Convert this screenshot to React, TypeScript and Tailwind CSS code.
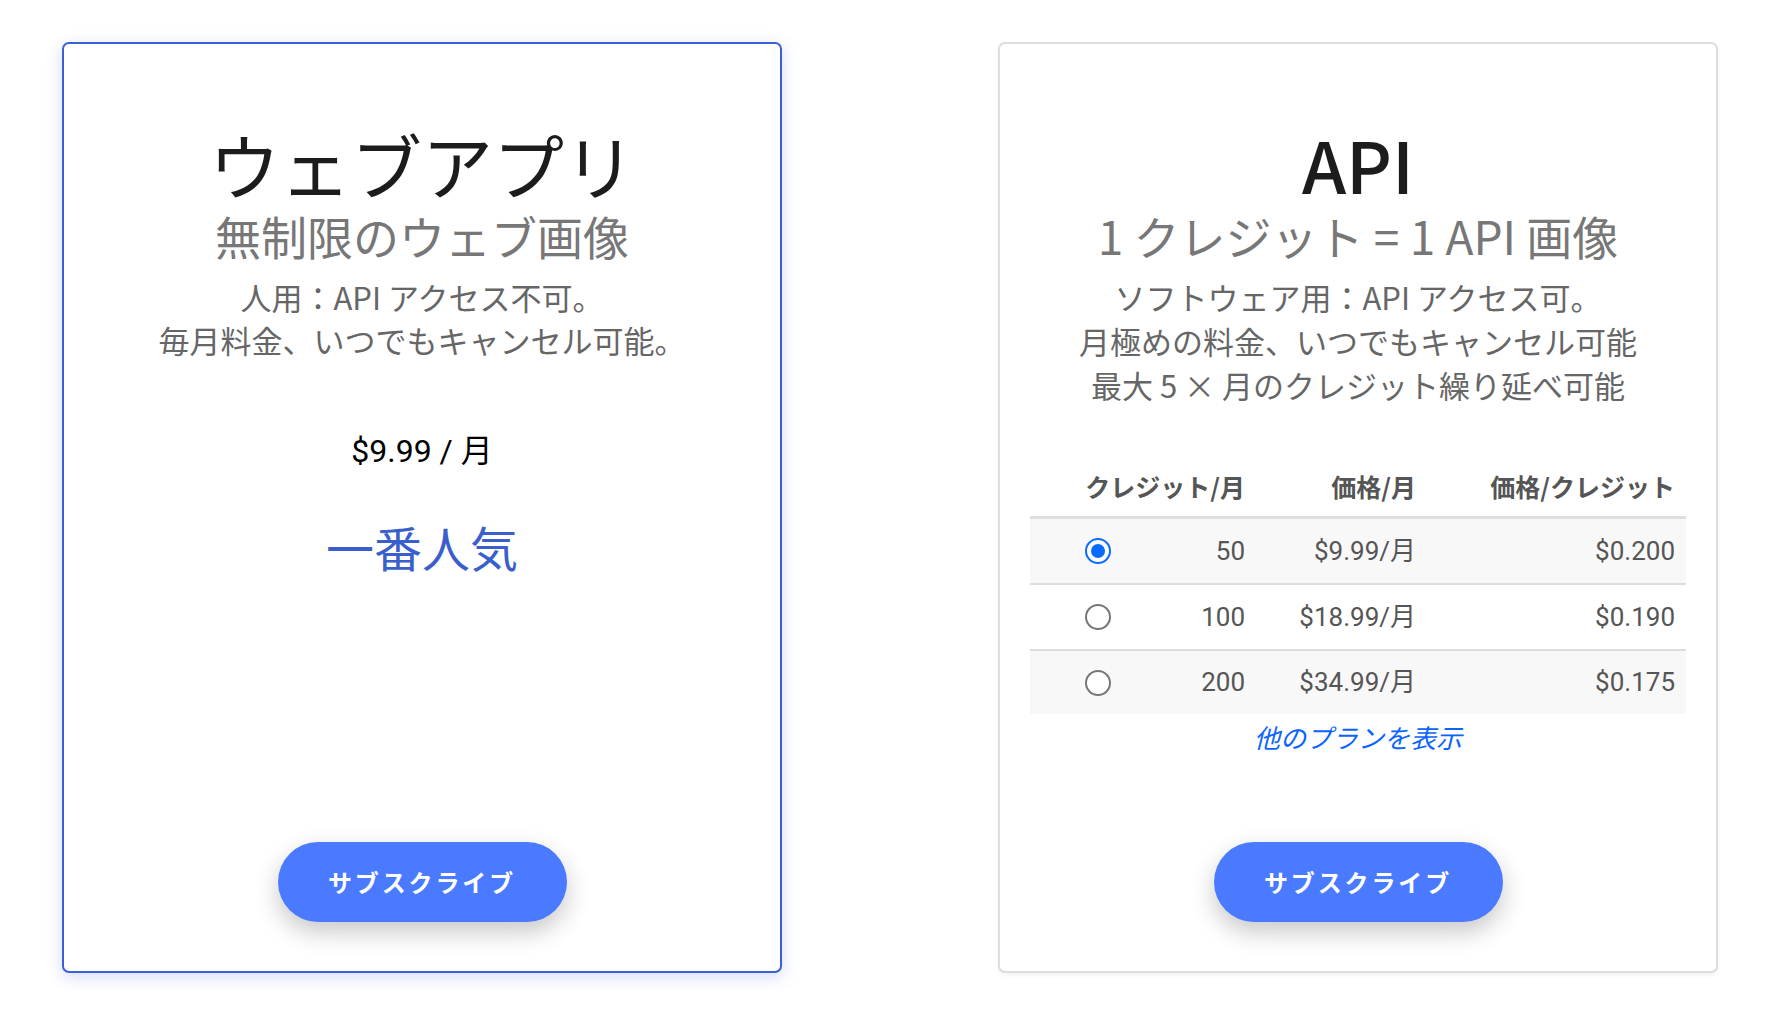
import React from "react";

const rows = [
  { credits: "50", price: "$9.99/月", per: "$0.200", selected: true, shaded: true },
  { credits: "100", price: "$18.99/月", per: "$0.190", selected: false, shaded: false },
  { credits: "200", price: "$34.99/月", per: "$0.175", selected: false, shaded: true },
];

function Radio({ checked }: { checked: boolean }) {
  return checked ? (
    <span className="flex h-[26px] w-[26px] items-center justify-center rounded-full border-[2.5px] border-[#0a6cff] bg-white">
      <span className="h-[14px] w-[14px] rounded-full bg-[#0a6cff]" />
    </span>
  ) : (
    <span className="block h-[26px] w-[26px] rounded-full border-2 border-[#767676] bg-white" />
  );
}

function SubscribeButton() {
  return (
    <button className="mt-auto mb-[49px] h-[80px] w-[289px] self-center rounded-full bg-[#4a7aff] text-[24px] font-bold tracking-[0.12em] text-white shadow-[0_10px_24px_rgba(0,0,0,0.22)]">
      サブスクライブ
    </button>
  );
}

export default function App() {
  return (
    <div
      className="flex h-[1020px] w-full justify-between bg-white pt-[42px] pl-[62px] pr-[58px]"
      style={{ fontFamily: '"Noto Sans CJK JP", "Noto Sans", sans-serif' }}
    >
      {/* Web app card */}
      <div className="flex h-[931px] w-[720px] flex-col rounded-[7px] border-2 border-[#3a5fd6] bg-white text-center shadow-[0_4px_16px_rgba(58,95,214,0.22)]">
        <h1 className="pt-[83px] text-[71px] font-normal leading-[72px] text-[#1c1c1c]">ウェブアプリ</h1>
        <h2 className="mt-[12px] text-[46px] font-normal leading-[48px] text-[#777777]">無制限のウェブ画像</h2>
        <div className="mt-[16px] text-[31px] leading-[43px] text-[#666666]">
          <p>人用：API アクセス不可。</p>
          <p>毎月料金、いつでもキャンセル可能。</p>
        </div>
        <p
          className="mt-[68px] text-[32px] leading-[44px] text-black"
          style={{ fontFamily: 'Roboto, "Noto Sans CJK JP", sans-serif' }}
        >
          $9.99 / 月
        </p>
        <p className="mt-[49px] text-[48px] leading-[48px] text-[#3a5fcd]">一番人気</p>
        <SubscribeButton />
      </div>

      {/* API card */}
      <div className="flex h-[931px] w-[720px] flex-col rounded-[7px] border-2 border-[#dddddd] bg-white px-[30px] text-center shadow-[0_2px_4px_rgba(0,0,0,0.06)]">
        <h1 className="pt-[83px] text-[71px] font-medium leading-[72px] text-[#1c1c1c]">API</h1>
        <h2 className="mt-[12px] text-[46px] font-normal leading-[48px] text-[#777777]">1 クレジット = 1 API 画像</h2>
        <div className="mt-[16px] text-[31px] leading-[44px] text-[#666666]">
          <p>ソフトウェア用：API アクセス可。</p>
          <p>月極めの料金、いつでもキャンセル可能</p>
          <p>最大 5 × 月のクレジット繰り延べ可能</p>
        </div>

        <div className="mt-[50px] w-[656px] text-[#555555]">
          <div className="grid h-[62px] grid-cols-[136px_90px_171px_1fr] items-center border-b-[3px] border-[#dddddd] text-[25px] font-bold">
            <div className="col-span-2 pr-[11px] text-right">クレジット/月</div>
            <div className="pr-[11px] text-right">価格/月</div>
            <div className="pr-[11px] text-right">価格/クレジット</div>
          </div>
          {rows.map((r, i) => (
            <div
              key={r.credits}
              className={`grid grid-cols-[136px_90px_171px_1fr] items-center text-[26px] ${
                r.shaded ? "bg-[#f8f8f8]" : "bg-white"
              } ${i < rows.length - 1 ? "h-[66px] border-b-2 border-[#dddddd]" : "h-[63px]"}`}
              style={{ fontFamily: 'Roboto, "Noto Sans CJK JP", sans-serif' }}
            >
              <div className="flex justify-center">
                <Radio checked={r.selected} />
              </div>
              <div className="pr-[11px] text-right">{r.credits}</div>
              <div className="pr-[11px] text-right">{r.price}</div>
              <div className="pr-[11px] text-right">{r.per}</div>
            </div>
          ))}
        </div>
        <a className="mt-[5px] text-[26px] italic leading-[36px] text-[#0a64ff]">他のプランを表示</a>
        <SubscribeButton />
      </div>
    </div>
  );
}
